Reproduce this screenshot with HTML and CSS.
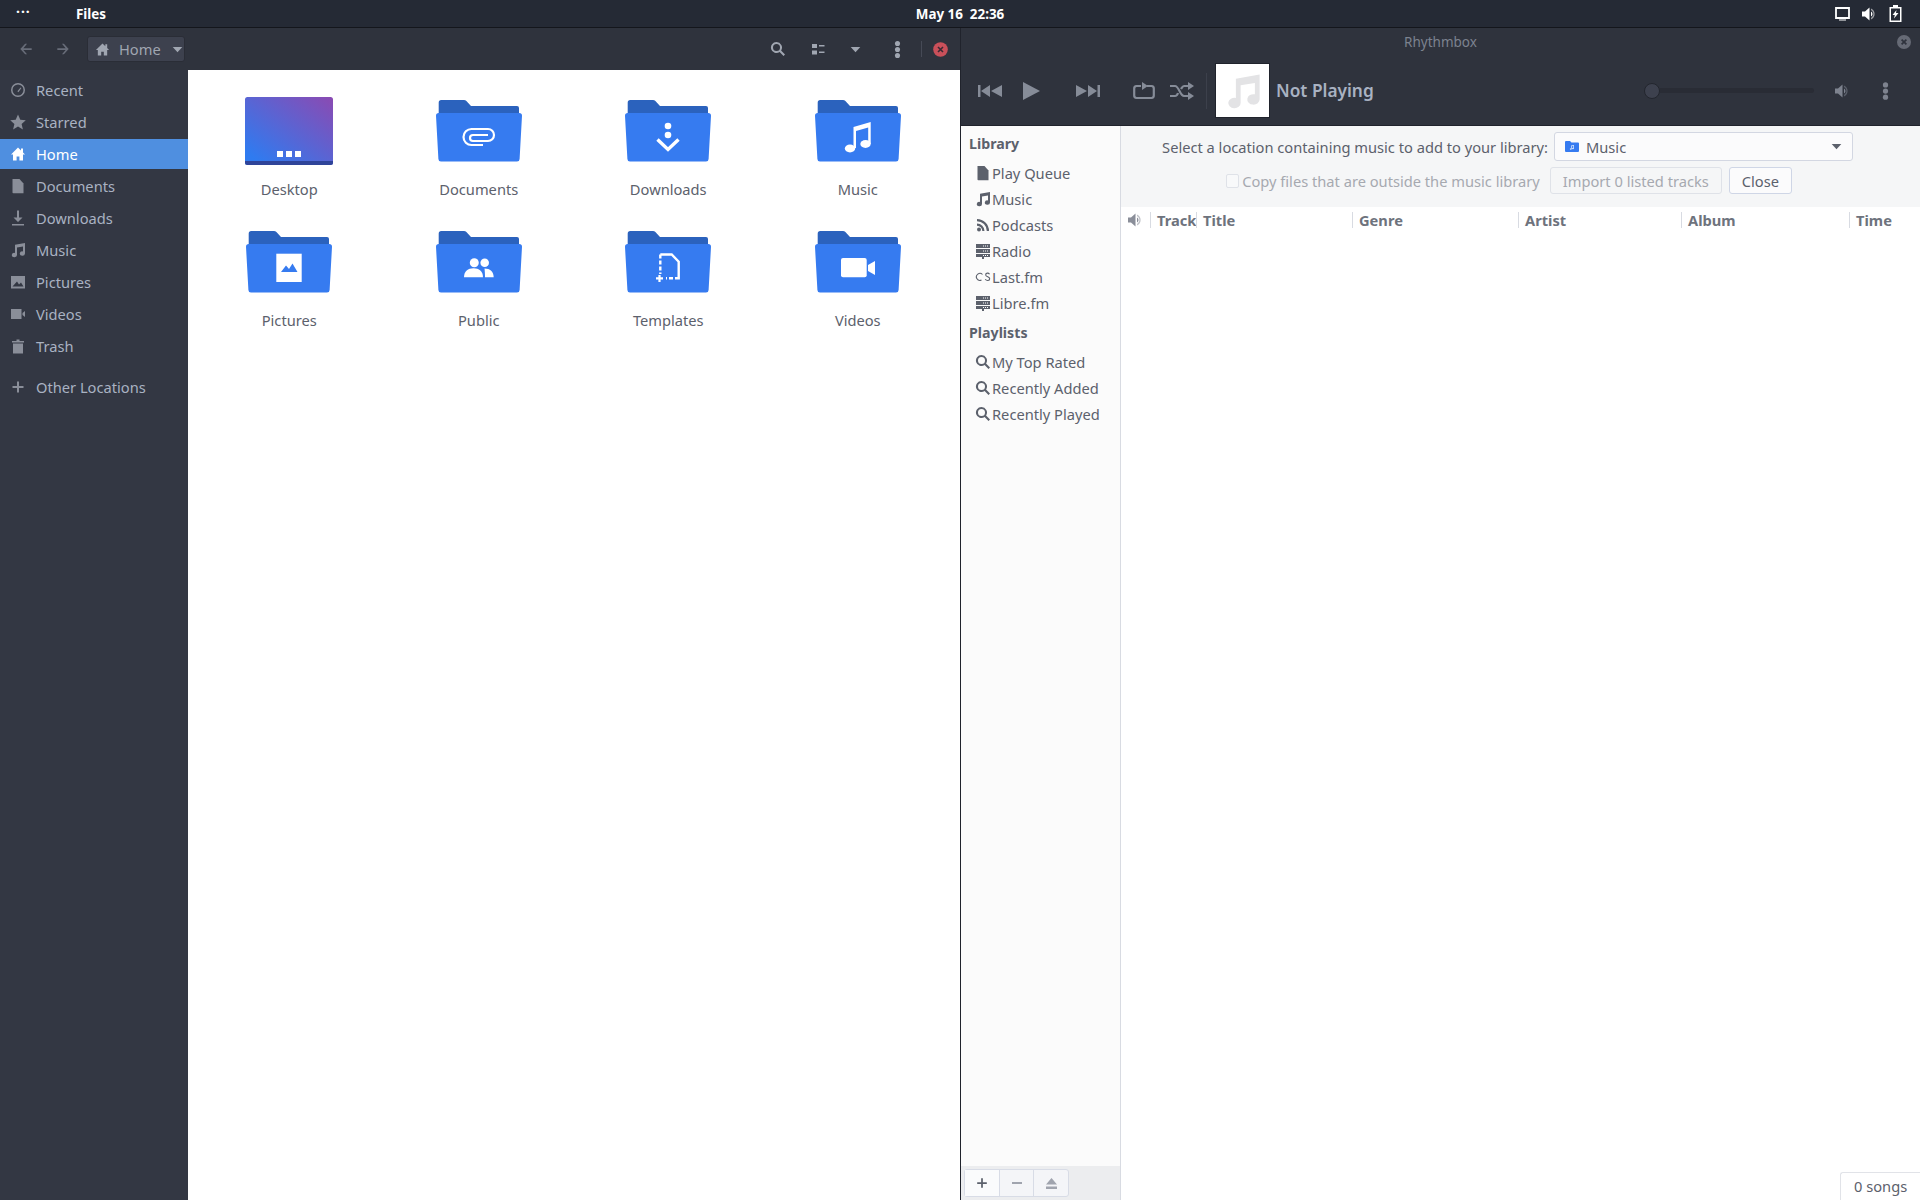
FILE: index.html
```html
<!DOCTYPE html>
<html>
<head>
  <title>Files and Rhythmbox</title>
  <link rel="stylesheet" href="styles.css">
</head>
<body>
  <svg class="sprites" width="0" height="0">
    <symbol id="i-home" viewBox="0 0 16 16"><path d="M8 1.5 1 8.5h2v6h3.6v-4h2.8v4H13v-6h2l-2-2V2.5h-2v2z"/></symbol>
    <symbol id="i-clock" viewBox="0 0 16 16"><path d="M8 1a7 7 0 1 0 0 14A7 7 0 0 0 8 1zm0 1.5a5.5 5.5 0 1 1 0 11 5.5 5.5 0 0 1 0-11z"/><path d="M7.4 9.2 10.6 5.400l.8.6-3 4.200z"/></symbol>
    <symbol id="i-star" viewBox="0 0 16 16"><path d="M8 .5l2.300 5.200 5.500.5-4.200 3.700 1.300 5.600L8 12.600l-4.900 2.900 1.300-5.600L.2 6.200l5.500-.5z"/></symbol>
    <symbol id="i-doc" viewBox="0 0 16 16"><path d="M2.500 1H9.500l4 4.500V15.200H3.300a.8.8 0 0 1-.8-.8z"/></symbol>
    <symbol id="i-down" viewBox="0 0 16 16"><path d="M7 .5h2v7h3.500L8 12 3.500 7.500H7zM2 14h12v1.500H2z"/></symbol>
    <symbol id="i-music" viewBox="0 0 16 16"><path d="M5 2.800 15 1v10.500a2.600 2.200 0 1 1-2-2.100V4.600l-6 1v7.400a2.600 2.200 0 1 1-2-2.100z"/></symbol>
    <symbol id="i-pic" viewBox="0 0 16 16"><path d="M1 2h14v12.500H1zm1.500 10.500h11L11 8.500l-2 2-2-3z" fill-rule="evenodd"/></symbol>
    <symbol id="i-video" viewBox="0 0 16 16"><path d="M1 3h10.500v10H1zM12.500 7 15 5v6l-2.500-2z"/></symbol>
    <symbol id="i-trash" viewBox="0 0 16 16"><path d="M2 3h4.500V1.500h3V3H14v1.500H2zM3 5.500h10V15.500H3z"/></symbol>
    <symbol id="i-plus" viewBox="0 0 16 16"><path d="M7 2.500h2V7h4.500v2H9v4.500H7V9H2.500V7H7z"/></symbol>
    <symbol id="i-back" viewBox="0 0 16 16"><path d="M7 2 1.500 8 7 14h2.200L5 9h9.500V7H5l4.200-5z"/></symbol>
    <symbol id="i-fwd" viewBox="0 0 16 16"><path d="M9 2l5.500 6L9 14H6.800l4.200-5H1.500V7H11L6.800 2z"/></symbol>
    <symbol id="i-search" viewBox="0 0 16 16"><path d="M6.500 1a5.500 5.500 0 1 0 3.100 10l3.900 4 1.500-1.500-3.900-4A5.500 5.500 0 0 0 6.500 1zm0 2a3.500 3.500 0 1 1 0 7 3.500 3.500 0 0 1 0-7z"/></symbol>
    <symbol id="i-kebab" viewBox="0 0 8 20"><circle cx="4" cy="3" r="3"/><circle cx="4" cy="10" r="3"/><circle cx="4" cy="17" r="3"/></symbol>
    <symbol id="i-tri" viewBox="0 0 12 8"><path d="M.500 1h11L6 7z"/></symbol>
    <symbol id="i-speaker" viewBox="0 0 16 16"><path d="M1 5.500h3L8.500 1.500v13L4 10.500H1z"/><path d="M10 2.500a6 6 0 0 1 0 11v-1.400a4.700 4.700 0 0 0 0-8.200z" opacity=".55"/><path d="M10 5.500a2.800 2.800 0 0 1 0 5z"/></symbol>
    <symbol id="i-rss" viewBox="0 0 16 16"><circle cx="4" cy="12.500" r="2"/><path d="M2 6.500v2.200a5.300 5.300 0 0 1 5.300 5.300h2.200A7.500 7.500 0 0 0 2 6.500zM2 2v2.200A9.800 9.800 0 0 1 11.800 14H14A12 12 0 0 0 2 2z"/></symbol>
    <symbol id="i-rack" viewBox="0 0 16 16"><path d="M1 1h14v4H1zM1 6h14v4H1zM1 11h14v3H9v2H7v-2H1z"/><path d="M8 2.500h1v1H8zM10 2.500h1v1h-1zM12 2.500h1v1h-1zM8 7.500h1v1H8zM10 7.500h1v1h-1zM12 7.500h1v1h-1zM8 12h1v1H8zM10 12h1v1h-1zM12 12h1v1h-1z" fill="#fff"/></symbol>
    <symbol id="i-lastfm" viewBox="0 0 16 16"><path d="M7.500 5.500A3.500 3.500 0 1 0 6.500 11" fill="none" stroke="currentColor" stroke-width="1.100"/><path d="M14.500 5.200C13.500 3.500 10.500 3.800 10.700 6c.2 2.200 4 1.500 4 3.800 0 2.200-3.200 2.300-4.500.5" fill="none" stroke="currentColor" stroke-width="1.100"/></symbol>
    <symbol id="i-folder" viewBox="0 0 86 62">
      <path d="M2.700 12V2.500A2.500 2.500 0 0 1 5.200 0H28q1.400 0 2.400 1l4.600 5H81a2 2 0 0 1 2 2v8H2.700z" fill="#2b62bd"/>
      <path d="M2.800 13H83.200q2.800 0 2.800 2.800L83.600 59a2.600 2.600 0 0 1-2.600 2.500H5a2.600 2.600 0 0 1-2.600-2.500L0 15.800Q0 13 2.800 13z" fill="#367bf0"/>
    </symbol>
    <linearGradient id="desk-grad" x1="0" y1="1" x2="1" y2="0">
      <stop offset=".1" stop-color="#2f7bf0"/>
      <stop offset="1" stop-color="#8b4ab2"/>
    </linearGradient>
  </svg>

  <div class="topbar">
    <div class="activities">···</div>
    <div class="appname">Files</div>
    <div class="clock">May 16&nbsp;&nbsp;22:36</div>
    <div class="tray">
      <svg class="tray-screen" width="15" height="14" viewBox="0 0 15 14"><path d="M1 1h13v10H1z" fill="none" stroke="#fff" stroke-width="1.800"/><path d="M4 12.500h7v1H4z" fill="#fff"/></svg>
      <svg class="icon" width="16" height="16"><use href="#i-speaker"/></svg>
      <svg class="tray-batt" width="13" height="17" viewBox="0 0 13 17"><path d="M4 0h5v2h3.500v15H.5V2H4zM2 3.500v12h9v-12z" fill="#fff" fill-rule="evenodd"/><path d="M7.500 5 3.500 10h2.300L5 13.500 9.500 8H7z" fill="#fff"/></svg>
    </div>
  </div>

  <div class="desktop">
    <div class="files-win">
      <div class="files-head">
        <div class="nav-btn"><svg class="icon" width="14" height="14"><use href="#i-back"/></svg></div>
        <div class="nav-btn"><svg class="icon" width="14" height="14"><use href="#i-fwd"/></svg></div>
        <div class="pathbar">
          <svg class="icon" width="15" height="15"><use href="#i-home"/></svg>
          <span>Home</span>
          <svg class="icon path-tri" width="11" height="7"><use href="#i-tri"/></svg>
        </div>
        <div class="head-gap"></div>
        <svg class="icon h-search" width="16" height="16"><use href="#i-search"/></svg>
        <svg class="h-view" width="13" height="11" viewBox="0 0 13 11"><path d="M0 0h5v4H0zM0 6.500h5v4H0zM7 1h5.500v1.600H7zM7 7.500h5.500v1.600H7z" fill="#a0a6b1"/></svg>
        <svg class="icon h-tri" width="11" height="7"><use href="#i-tri"/></svg>
        <svg class="icon h-kebab" width="7" height="17"><use href="#i-kebab"/></svg>
        <div class="h-sep"></div>
        <svg class="h-close" width="15" height="15" viewBox="0 0 15 15"><circle cx="7.500" cy="7.500" r="7.300" fill="#c9505a"/><path d="M5 5l5 5M10 5l-5 5" stroke="#3a2a33" stroke-width="1.600"/></svg>
      </div>
      <div class="files-body">
        <div class="places">
          <div class="place"><svg class="icon" width="16" height="16"><use href="#i-clock"/></svg>Recent</div>
          <div class="place"><svg class="icon" width="16" height="16"><use href="#i-star"/></svg>Starred</div>
          <div class="place selected"><svg class="icon" width="16" height="16"><use href="#i-home"/></svg>Home</div>
          <div class="place"><svg class="icon" width="16" height="16"><use href="#i-doc"/></svg>Documents</div>
          <div class="place"><svg class="icon" width="16" height="16"><use href="#i-down"/></svg>Downloads</div>
          <div class="place"><svg class="icon" width="16" height="16"><use href="#i-music"/></svg>Music</div>
          <div class="place"><svg class="icon" width="16" height="16"><use href="#i-pic"/></svg>Pictures</div>
          <div class="place"><svg class="icon" width="16" height="16"><use href="#i-video"/></svg>Videos</div>
          <div class="place"><svg class="icon" width="16" height="16"><use href="#i-trash"/></svg>Trash</div>
          <div class="place other"><svg class="icon" width="16" height="16"><use href="#i-plus"/></svg>Other Locations</div>
        </div>
        <div class="file-grid">
          <div class="file">
            <svg width="96" height="96" viewBox="-5 -17 96 96">
              <rect x="-1" y="-3" width="88" height="68" rx="2.500" fill="url(#desk-grad)"/>
              <path d="M-1 61h88v1.500a2.500 2.500 0 0 1-2.500 2.500h-83A2.500 2.500 0 0 1-1 62.500z" fill="#2f4499"/>
              <path d="M31 51h6v6h-6zM40 51h6v6h-6zM49 51h6v6h-6z" fill="#fff"/>
            </svg>
            <span>Desktop</span>
          </div>
          <div class="file">
            <svg width="96" height="96" viewBox="-5 -17 96 96">
              <use href="#i-folder" width="86" height="62"/>
              <path d="M47 45H35.500a8 8 0 0 1 0-16H52a6 6 0 0 1 0 12H37a3 3 0 0 1 0-6h15" fill="none" stroke="#fff" stroke-width="2.200"/>
            </svg>
            <span>Documents</span>
          </div>
          <div class="file">
            <svg width="96" height="96" viewBox="-5 -17 96 96">
              <use href="#i-folder" width="86" height="62"/>
              <circle cx="43" cy="26" r="3.300" fill="#fff"/>
              <circle cx="43" cy="35" r="3.300" fill="#fff"/>
              <path d="M32.500 39.500 43 49.500l10.500-10" fill="none" stroke="#fff" stroke-width="3.400"/>
            </svg>
            <span>Downloads</span>
          </div>
          <div class="file">
            <svg width="96" height="96" viewBox="-5 -17 96 96">
              <use href="#i-folder" width="86" height="62"/>
              <path d="M38.500 27 55.700 22v22h-2.500V27.500L41 31v17h-2.500z" fill="#fff"/>
              <ellipse cx="35" cy="48.500" rx="5.200" ry="3.900" fill="#fff"/>
              <ellipse cx="50.500" cy="44" rx="5.200" ry="3.900" fill="#fff"/>
            </svg>
            <span>Music</span>
          </div>
          <div class="file">
            <svg width="96" height="96" viewBox="-5 -17 96 96">
              <use href="#i-folder" width="86" height="62"/>
              <path d="M30.300 22.700h25.400V51H30.300z" fill="#fff"/>
              <path d="M35 41l5-6.500 3 3.500 3.500-5.500 5 8.500z" fill="#367bf0"/>
            </svg>
            <span>Pictures</span>
          </div>
          <div class="file">
            <svg width="96" height="96" viewBox="-5 -17 96 96">
              <use href="#i-folder" width="86" height="62"/>
              <circle cx="38.300" cy="31.700" r="4.500" fill="#fff"/>
              <circle cx="48.700" cy="31.700" r="4.300" fill="#fff"/>
              <path d="M28 46.300c0-6 4-9 9.500-9s9.500 3 9.500 9z" fill="#fff"/>
              <path d="M48.500 37.500c5.500 0 9.200 3 9.200 8.800H49c0-3.300-.2-6-.5-8.800z" fill="#fff"/>
            </svg>
            <span>Public</span>
          </div>
          <div class="file">
            <svg width="96" height="96" viewBox="-5 -17 96 96">
              <use href="#i-folder" width="86" height="62"/>
              <path d="M35.300 23.500V43" fill="none" stroke="#fff" stroke-width="2.400" stroke-dasharray="4 2"/>
              <path d="M35.300 23.500H46.700L53.700 30.700V47.300H50" fill="none" stroke="#fff" stroke-width="2.400"/>
              <path d="M48 47.300H41" fill="none" stroke="#fff" stroke-width="2.400" stroke-dasharray="4 2"/>
              <path d="M31 47.300h7M34.500 44v7" fill="none" stroke="#fff" stroke-width="2.200"/>
            </svg>
            <span>Templates</span>
          </div>
          <div class="file">
            <svg width="96" height="96" viewBox="-5 -17 96 96">
              <use href="#i-folder" width="86" height="62"/>
              <rect x="26" y="27" width="25.700" height="19.300" rx="2" fill="#fff"/>
              <path d="M53 34l7-4v14l-7-4z" fill="#fff"/>
            </svg>
            <span>Videos</span>
          </div>
        </div>
      </div>
    </div>

    <div class="rb-win">
      <div class="rb-head">
        <div class="rb-title">
          <span></span>
          <span>Rhythmbox</span>
          <svg class="rb-close" width="14" height="14" viewBox="0 0 14 14"><circle cx="7" cy="7" r="7" fill="#666a75"/><path d="M4.600 4.600l4.800 4.800M9.400 4.600l-4.800 4.800" stroke="#2f333d" stroke-width="1.700"/></svg>
        </div>
        <div class="rb-tools">
          <svg class="t-prev" width="24" height="12" viewBox="0 0 24 12"><path d="M0 0h2.500v12H0zM3 6l9-6v12zM13 6l11-6v12z" fill="#868c98"/></svg>
          <svg class="t-play" width="17" height="18" viewBox="0 0 17 18"><path d="M0 0l17 9L0 18z" fill="#868c98"/></svg>
          <svg class="t-next" width="24" height="12" viewBox="0 0 24 12"><path d="M24 0h-2.500v12H24zM21 6l-9-6v12zM11 6 0 0v12z" fill="#868c98"/></svg>
          <svg class="t-repeat" width="22" height="18" viewBox="0 0 22 18"><path d="M8 4H3.500A2.500 2.500 0 0 0 1.200 6.500v7A2.500 2.500 0 0 0 3.500 16h15a2.500 2.500 0 0 0 2.300-2.500v-7A2.500 2.500 0 0 0 18.500 4H14" fill="none" stroke="#868c98" stroke-width="2.200"/><path d="M9 0l6 4-6 4z" fill="#868c98"/></svg>
          <svg class="t-shuffle" width="24" height="18" viewBox="0 0 24 18"><path d="M0 4h5c4 0 5 10 9 10h5M0 14h5c1.500 0 2.500-1.500 3-3M11 7c1-1.500 1.500-3 3-3h5" fill="none" stroke="#868c98" stroke-width="2.200"/><path d="M18 0l6 4-6 4zM18 10l6 4-6 4z" fill="#868c98"/></svg>
          <div class="t-sep"></div>
          <div class="art">
            <svg width="38" height="38" viewBox="0 0 16 16"><use href="#i-music" fill="#e3e3e5"/></svg>
          </div>
          <div class="now">Not Playing</div>
          <div class="volume-slider"><div class="knob"></div><div class="track"></div></div>
          <svg class="icon t-vol" width="16" height="16"><use href="#i-speaker"/></svg>
          <svg class="icon t-kebab" width="7" height="20"><use href="#i-kebab"/></svg>
        </div>
      </div>
      <div class="rb-body">
        <div class="rb-side">
          <div class="rb-list">
            <div class="rb-cat">Library</div>
            <div class="rb-item"><svg class="icon" width="16" height="16"><use href="#i-doc"/></svg>Play Queue</div>
            <div class="rb-item"><svg class="icon" width="16" height="16"><use href="#i-music"/></svg>Music</div>
            <div class="rb-item"><svg class="icon" width="16" height="16"><use href="#i-rss"/></svg>Podcasts</div>
            <div class="rb-item"><svg class="icon" width="16" height="16"><use href="#i-rack"/></svg>Radio</div>
            <div class="rb-item"><svg class="icon" width="16" height="16"><use href="#i-lastfm"/></svg>Last.fm</div>
            <div class="rb-item"><svg class="icon" width="16" height="16"><use href="#i-rack"/></svg>Libre.fm</div>
            <div class="rb-cat playlists">Playlists</div>
            <div class="rb-item"><svg class="icon" width="16" height="16"><use href="#i-search"/></svg>My Top Rated</div>
            <div class="rb-item"><svg class="icon" width="16" height="16"><use href="#i-search"/></svg>Recently Added</div>
            <div class="rb-item"><svg class="icon" width="16" height="16"><use href="#i-search"/></svg>Recently Played</div>
          </div>
          <div class="rb-foot">
            <div class="foot-btns">
              <div class="foot-btn active"><svg class="icon" width="14" height="14"><use href="#i-plus"/></svg></div>
              <div class="foot-btn"><svg width="10" height="2" viewBox="0 0 10 2"><path d="M0 0h10v2H0z" fill="#a0a4ae"/></svg></div>
              <div class="foot-btn"><svg width="11" height="11" viewBox="0 0 11 11"><path d="M5.500 0 11 6.500H0zM0 8.500h11V11H0z" fill="#a0a4ae"/></svg></div>
            </div>
          </div>
        </div>
        <div class="rb-main">
          <div class="import-bar">
            <div class="import-row">
              <span>Select a location containing music to add to your library:</span>
              <div class="combo">
                <svg width="14" height="11" viewBox="0 0 14 11"><path d="M0 1q0-1 1-1h4l1.500 1.500H13q1 0 1 1V10q0 1-1 1H1q-1 0-1-1z" fill="#367bf0"/><path d="M6 4.500 9 4v3.500a1 .8 0 1 1-.8-.8V5L6.800 5.300V8a1 .8 0 1 1-.8-.8z" fill="#cfe0fb"/></svg>
                <span>Music</span>
                <svg class="icon combo-tri" width="11" height="7"><use href="#i-tri"/></svg>
              </div>
            </div>
            <div class="import-row second">
              <span class="check"></span>
              <span class="dim">Copy files that are outside the music library</span>
              <div class="btn disabled">Import 0 listed tracks</div>
              <div class="btn">Close</div>
            </div>
          </div>
          <div class="track-head">
            <div class="col first"><svg class="icon" width="16" height="16"><use href="#i-speaker"/></svg></div>
            <div class="col">Track</div>
            <div class="col">Title</div>
            <div class="col">Genre</div>
            <div class="col">Artist</div>
            <div class="col">Album</div>
            <div class="col">Time</div>
          </div>
          <div class="track-list"></div>
          <div class="status-row"><div class="songs">0 songs</div></div>
        </div>
      </div>
    </div>
  </div>
</body>
</html>
```

FILE: styles.css
```css
* {
  box-sizing: border-box;
}

html, body {
  height: 100%;
}

body {
  margin: 0;
  display: flex;
  flex-direction: column;
  font-family: "Noto Sans", sans-serif;
  font-size: 14.67px;
  color: #5c616c;
  background: #20232c;
  overflow: hidden;
}

.sprites {
  position: absolute;
}

.icon {
  fill: currentColor;
  flex: none;
}

/* top panel */
.topbar {
  height: 28px;
  flex: none;
  display: grid;
  grid-template-columns: 1fr auto 1fr;
  position: relative;
  align-items: center;
  background: #252a35;
  border-bottom: 1px solid #14161c;
  color: #fff;
  font-weight: 700;
  font-size: 13.4px;
}

.activities {
  position: absolute;
  left: 16px;
  top: 2px;
  font-size: 14px;
  letter-spacing: 1px;
}

.appname {
  padding-left: 76px;
}

.tray {
  display: flex;
  justify-content: flex-end;
  align-items: center;
  padding-right: 18px;
}

.tray-screen {
  margin-right: 11px;
}

.tray-batt {
  margin-left: 12px;
}

.desktop {
  flex: 1;
  display: flex;
  min-height: 0;
}

/* files window */
.files-win {
  width: 960px;
  flex: none;
  display: flex;
  flex-direction: column;
}

.files-head {
  height: 42px;
  flex: none;
  display: flex;
  align-items: center;
  padding-left: 7px;
  padding-right: 12px;
  background: #2f333d;
  color: #a0a6b1;
}

.nav-btn {
  width: 37px;
  display: flex;
  justify-content: center;
  color: #686d79;
}

.pathbar {
  width: 98px;
  height: 26px;
  margin-left: 6px;
  display: flex;
  align-items: center;
  padding-left: 7px;
  background: #3d414e;
  border: 1px solid #2a2d36;
  border-radius: 3px;
  color: #a0a6b1;
}

.pathbar span {
  margin-left: 9px;
}

.path-tri {
  margin-left: 11px;
}

.head-gap {
  flex: 1;
}

.h-view {
  margin-left: 26px;
}

.h-tri {
  margin-left: 25px;
}

.h-kebab {
  margin-left: 33px;
}

.h-sep {
  width: 1px;
  height: 16px;
  margin-left: 20px;
  background: #464a56;
}

.h-close {
  margin-left: 11px;
}

.files-body {
  flex: 1;
  display: flex;
  min-height: 0;
}

.places {
  width: 188px;
  flex: none;
  padding-top: 4px;
  background: #333743;
  color: #a9b2c2;
}

.place {
  height: 32px;
  display: flex;
  align-items: center;
  gap: 10px;
  padding-left: 10px;
  padding-right: 10px;
}

.place .icon {
  color: #8a8e99;
}

.place.selected {
  height: 30px;
  margin: 1px 0;
  background: #4f8fe0;
  color: #fff;
}

.place.selected .icon {
  color: #fff;
}

.place.other {
  margin-top: 9px;
}

.file-grid {
  flex: 1;
  display: grid;
  grid-template-columns: repeat(4, 189.5px);
  grid-auto-rows: 131px;
  align-content: start;
  padding-top: 13px;
  padding-left: 6.5px;
  background: #fff;
}

.file {
  display: flex;
  flex-direction: column;
  align-items: center;
  color: #5c616c;
}

.file svg {
  display: block;
}

/* rhythmbox window */
.rb-win {
  flex: 1;
  display: flex;
  flex-direction: column;
  border-left: 1px solid #20232c;
  min-width: 0;
}

.rb-head {
  height: 98px;
  flex: none;
  background: #2f333d;
  border-bottom: 1px solid #20232c;
}

.rb-title {
  height: 28px;
  display: grid;
  grid-template-columns: 1fr auto 1fr;
  align-items: center;
  color: #7c828f;
  font-size: 13.5px;
}

.rb-close {
  justify-self: end;
  margin-right: 9px;
}

.rb-tools {
  height: 69px;
  display: flex;
  align-items: center;
  padding-left: 17px;
  color: #7e838f;
}

.t-play {
  margin-left: 21px;
}

.t-next {
  margin-left: 36px;
}

.t-repeat {
  margin-left: 33px;
}

.t-shuffle {
  margin-left: 15px;
}

.t-sep {
  width: 1px;
  height: 36px;
  margin-left: 12px;
  background: #3c404b;
}

.art {
  width: 55px;
  height: 55px;
  margin-left: 8px;
  display: flex;
  align-items: center;
  justify-content: center;
  background: #fff;
  border: 1px solid #20232c;
}

.now {
  margin-left: 6px;
  width: 200px;
  font-size: 17.3px;
  font-weight: 600;
  color: #a9b2c2;
}

.volume-slider {
  width: 170px;
  margin-left: 168px;
  display: flex;
  align-items: center;
}

.knob {
  width: 16px;
  height: 16px;
  flex: none;
  border-radius: 50%;
  background: #3d414e;
  border: 1px solid #23262e;
}

.track {
  flex: 1;
  height: 5px;
  background: #292c35;
  border-radius: 0 3px 3px 0;
}

.t-vol {
  margin-left: 20px;
}

.t-kebab {
  margin-left: 32px;
}

.rb-body {
  flex: 1;
  display: flex;
  min-height: 0;
}

.rb-side {
  width: 160px;
  flex: none;
  display: flex;
  flex-direction: column;
  background: #fbfbfb;
  border-right: 1px solid #d8dbe2;
}

.rb-list {
  flex: 1;
  padding-top: 6px;
}

.rb-cat {
  height: 24px;
  line-height: 24px;
  padding-left: 8px;
  font-weight: 700;
  font-size: 14.2px;
  color: #5c616c;
}

.rb-cat.playlists {
  margin-top: 5px;
  margin-bottom: 4px;
}

.rb-item {
  height: 26px;
  display: flex;
  align-items: center;
  gap: 1px;
  padding-left: 14px;
  white-space: nowrap;
  color: #5c616c;
}

.rb-item:nth-child(2) {
  margin-top: 4px;
}

.rb-foot {
  height: 34px;
  flex: none;
  padding: 3px;
  background: #ecedef;
}

.foot-btns {
  width: 105px;
  height: 28px;
  display: flex;
  background: #f4f5f8;
  border: 1px solid #d8dce6;
  border-radius: 3px;
}

.foot-btn {
  flex: 1;
  display: flex;
  align-items: center;
  justify-content: center;
  border-right: 1px solid #d8dce6;
}

.foot-btn:last-child {
  border-right: none;
}

.foot-btn.active {
  background: #fafbfc;
  color: #5c616c;
}

.rb-main {
  flex: 1;
  display: flex;
  flex-direction: column;
  min-width: 0;
  background: #fff;
}

.import-bar {
  height: 81px;
  flex: none;
  padding-top: 6px;
  background: #f5f6f7;
}

.import-row {
  height: 29px;
  display: flex;
  align-items: center;
  justify-content: flex-end;
  padding-right: 67px;
  color: #5c616c;
}

.import-row.second {
  margin-top: 6px;
  height: 27px;
  padding-right: 128px;
}

.combo {
  width: 299px;
  height: 29px;
  margin-left: 6px;
  display: flex;
  align-items: center;
  padding-left: 10px;
  background: #fbfbfc;
  border: 1px solid #d3d7e2;
  border-radius: 3px;
}

.combo span {
  margin-left: 7px;
}

.combo-tri {
  margin-left: auto;
  margin-right: 10px;
}

.check {
  width: 13px;
  height: 14px;
  margin-right: 3px;
  border: 1px solid #dfe2e8;
  border-radius: 2px;
  background: #f8f9fa;
}

.dim {
  color: #a6a9b0;
}

.btn {
  height: 27px;
  margin-left: 7px;
  padding: 0 12px;
  display: flex;
  align-items: center;
  background: #fbfbfc;
  border: 1px solid #cfd6e6;
  border-radius: 3px;
}

.btn.disabled {
  margin-left: 10px;
  color: #a6a9b0;
  background: #f5f6f7;
  border-color: #dfe2e8;
}

.track-head {
  height: 26px;
  flex: none;
  display: grid;
  grid-template-columns: 29px 46px 156px 166px 163px 168px 1fr;
  align-items: center;
  font-weight: 700;
  color: #6e737d;
}

.col {
  height: 16px;
  line-height: 16px;
  padding-left: 6px;
  white-space: nowrap;
  border-left: 1px solid #d8dbe2;
}

.col.first {
  border-left: none;
  color: #8a8e99;
}

.track-list {
  flex: 1;
}

.status-row {
  height: 28px;
  flex: none;
  display: flex;
  justify-content: flex-end;
}

.songs {
  width: 80px;
  padding-left: 13px;
  line-height: 26px;
  border-left: 1px solid #e1e3e8;
  border-top: 1px solid #e1e3e8;
  border-radius: 3px 0 0 0;
}
```
